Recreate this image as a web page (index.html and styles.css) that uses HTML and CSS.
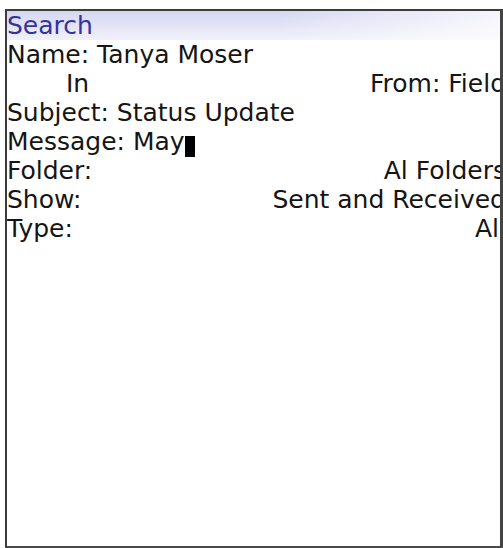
FILE: index.html
```html
<!DOCTYPE html>
<html>
<head>
<meta charset="utf-8">
<link rel="stylesheet" href="styles.css">
</head>
<body>
<div class="screen">
  <div class="title">Search</div>
  <div class="fields">
    <div class="row"><span>Name: Tanya Moser</span></div>
    <div class="row split"><span class="indent">In</span><span>From: Field</span></div>
    <div class="row"><span>Subject: Status Update</span></div>
    <div class="row"><span>Message: May<span class="cursor"></span></span></div>
    <div class="row split"><span>Folder:</span><span>Al Folders</span></div>
    <div class="row split"><span>Show:</span><span>Sent and Received</span></div>
    <div class="row split"><span>Type:</span><span>All</span></div>
  </div>
</div>
</body>
</html>
```
FILE: styles.css
```css
html, body {
  margin: 0;
  padding: 0;
  background: #ffffff;
}
body {
  width: 503px;
  height: 548px;
  overflow: hidden;
  font-family: "DejaVu Sans", "Liberation Sans", sans-serif;
  font-size: 25px;
  color: #151515;
}
.screen {
  box-sizing: border-box;
  margin: 9px 0 0 5px;
  width: 498px;
  height: 539px;
  border-top: 2px solid #3c3c3c;
  border-left: 2px solid #3c3c3c;
  border-right: 3px solid #444444;
  border-bottom: 2px solid #4a4a4a;
  overflow: hidden;
  background: #ffffff;
}
.title {
  height: 29px;
  line-height: 29px;
  padding-left: 0;
  color: #34349a;
  background:
    linear-gradient(to right, rgba(255,255,255,0) 55%, rgba(255,255,255,0.75) 100%),
    linear-gradient(to bottom, #d6d6f2, #f1f1fb);
}
.fields {
  width: calc(100% + 6px);
}
.row {
  display: flex;
  height: 29px;
  line-height: 29px;
  white-space: nowrap;
}
.row.split {
  justify-content: space-between;
}
.indent {
  padding-left: 59px;
}
.cursor {
  display: inline-block;
  width: 10px;
  height: 21px;
  background: #000000;
  vertical-align: -7px;
}
```
